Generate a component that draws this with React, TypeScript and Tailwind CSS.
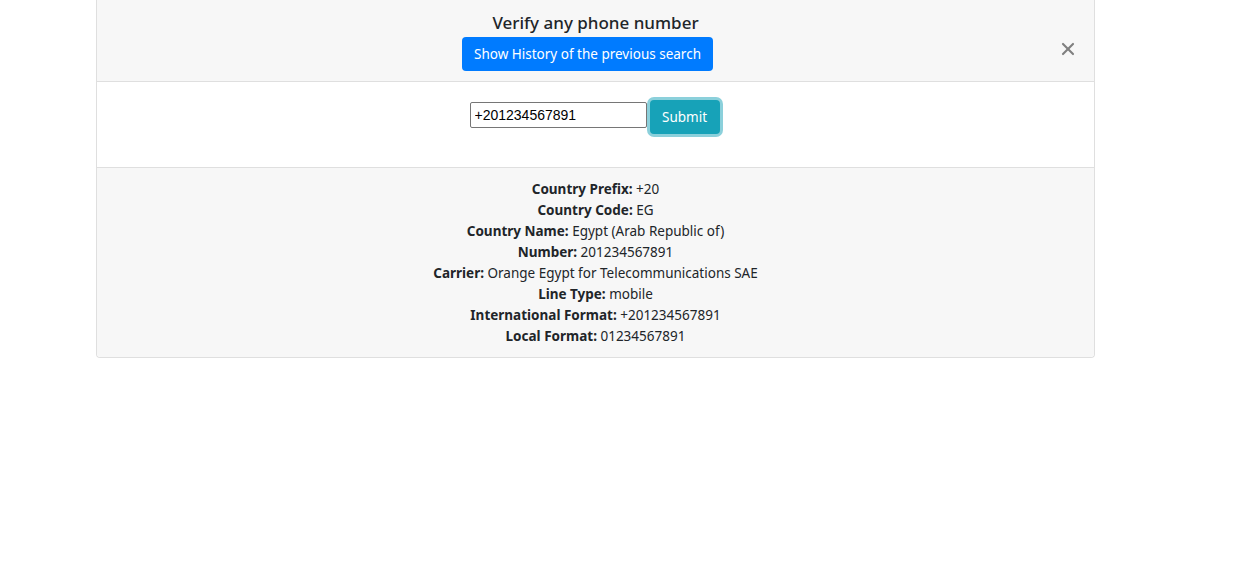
import { X } from 'lucide-react'

type Row = { label: string; value: string }

const rows: Row[] = [
  { label: 'Country Prefix:', value: '+20' },
  { label: 'Country Code:', value: 'EG' },
  { label: 'Country Name:', value: 'Egypt (Arab Republic of)' },
  { label: 'Number:', value: '201234567891' },
  { label: 'Carrier:', value: 'Orange Egypt for Telecommunications SAE' },
  { label: 'Line Type:', value: 'mobile' },
  { label: 'International Format:', value: '+201234567891' },
  { label: 'Local Format:', value: '01234567891' },
]

export default function App() {
  return (
    <div
      className="min-h-[582px] bg-white text-[#212529] pl-[96px]"
      style={{ fontFamily: '"Noto Sans", "Open Sans", sans-serif' }}
    >
      <div className="w-[999px] border border-t-0 border-[#dfdfdf] rounded-b-[4px]">
        {/* Header */}
        <div className="relative bg-[#f7f7f7] border-b border-[#dfdfdf] pt-[11px] pb-[10px] flex flex-col items-center">
          <h5 className="text-[17px] leading-[24px] font-medium mb-[2px]">Verify any phone number</h5>
          <button className="mr-[16px] h-[34px] px-[12.5px] rounded-[4px] bg-[#007bff] text-white text-[13.5px] leading-[21px]">
            Show History of the previous search
          </button>
          <button className="absolute right-[16px] top-[39px] text-[#808080]">
            <X size={20} strokeWidth={2.6} />
          </button>
        </div>

        {/* Body */}
        <div className="bg-white pt-[18px] pb-[33px] pr-[2px] flex justify-center items-start gap-[3px]">
          <input
            defaultValue="+201234567891"
            className="mt-[2px] w-[177px] h-[26px] border border-[#767676] rounded-[2px] px-[4px] text-[14px] text-black outline-none"
            style={{ fontFamily: '"Liberation Sans", Arial, sans-serif' }}
          />
          <button className="h-[34px] w-[70px] pt-[1px] rounded-[4px] bg-[#17a2b8] text-white text-[13.5px] shadow-[0_0_0_3px_rgba(23,162,184,0.5)]">
            Submit
          </button>
        </div>

        {/* Result */}
        <div className="bg-[#f7f7f7] border-t border-[#dfdfdf] rounded-b-[4px] pt-[11px] pb-[10px] text-center text-[13.5px] leading-[21px]">
          {rows.map(r => (
            <div key={r.label}>
              <span className="font-bold">{r.label}</span> {r.value}
            </div>
          ))}
        </div>
      </div>
    </div>
  )
}
